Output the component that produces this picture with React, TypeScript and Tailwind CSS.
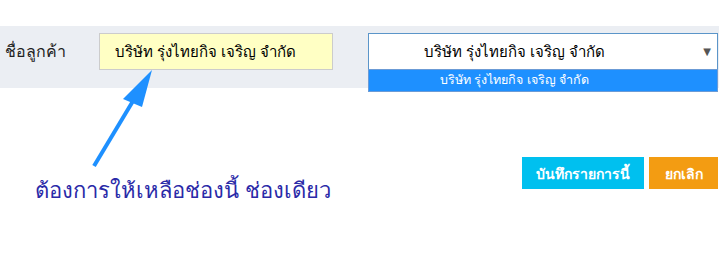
export default function App() {
  return (
    <div
      className="relative w-[719px] h-[269px] bg-white overflow-hidden"
      style={{ fontFamily: '"Noto Sans", "DejaVu Sans", Tahoma, sans-serif' }}
    >
      <div className="mt-[26px] h-[62px] bg-[#ebeef3] flex items-start">
        <div className="w-[99px] pl-[5px] pt-[15px] text-[16px] text-[#222] leading-5">ชื่อลูกค้า</div>
        <div className="mt-[7px] w-[234px] h-[37px] bg-[#ffffc4] border border-[#cccccc] pl-[15px] flex items-center text-[15px] text-black">
          บริษัท รุ่งไทยกิจ เจริญ จำกัด
        </div>
        <div className="relative ml-[35px] mt-[7px] w-[350px]">
          <div className="h-[36px] bg-white border border-[#5b95c9] border-b-0 flex items-center pl-[55px] text-[15px] text-black">
            บริษัท รุ่งไทยกิจ เจริญ จำกัด
            <span className="absolute right-[7px] top-[11px] text-[10px] text-[#555]">▼</span>
          </div>
          <div className="absolute left-0 top-[36px] w-[350px] h-[23px] bg-[#1e90ff] border border-[#6b9bd6] flex items-center pl-[71px] text-[12.5px] text-white leading-none">
            บริษัท รุ่งไทยกิจ เจริญ จำกัด
          </div>
        </div>
      </div>

      <svg className="absolute left-0 top-0" width="719" height="269" viewBox="0 0 719 269">
        <line x1="94" y1="166" x2="136" y2="96" stroke="#1e90ff" strokeWidth="4" strokeLinecap="butt" />
        <polygon points="152,70 123,99 142,107" fill="#1e90ff" />
      </svg>

      <div className="mt-[69px] flex items-start">
        <div className="ml-[35px] mt-[18px] text-[22px] text-[#2a2aa8] leading-7">ต้องการให้เหลือช่องนี้ ช่องเดียว</div>
        <div className="ml-auto mr-[1px] flex gap-[5px]">
          <button className="h-[32px] w-[122px] bg-[#00c0ef] text-white text-[14px] font-semibold">บันทึกรายการนี้</button>
          <button className="h-[32px] w-[69px] bg-[#f39c12] text-white text-[14px] font-semibold">ยกเลิก</button>
        </div>
      </div>
    </div>
  );
}
